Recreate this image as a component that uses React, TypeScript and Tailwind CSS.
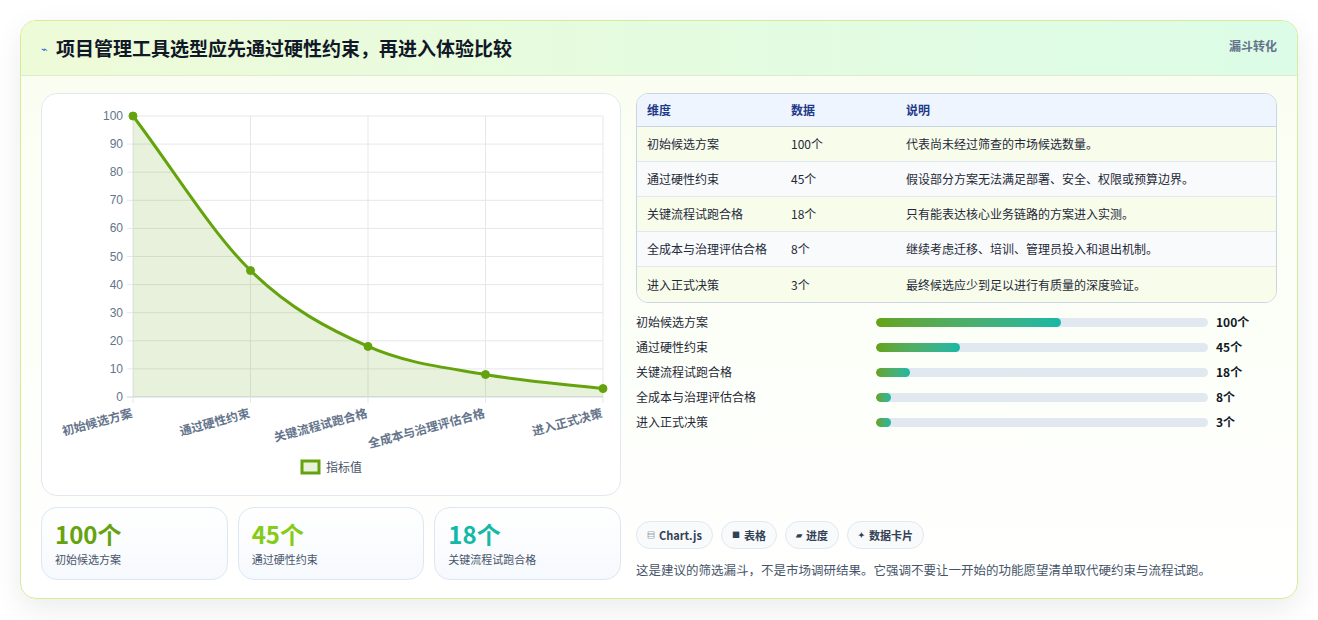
const F = { fontFamily: '"Noto Sans CJK SC","Noto Sans",sans-serif' };

const rows = [
  ["初始候选方案", "100个", "代表尚未经过筛查的市场候选数量。", 185],
  ["通过硬性约束", "45个", "假设部分方案无法满足部署、安全、权限或预算边界。", 84],
  ["关键流程试跑合格", "18个", "只有能表达核心业务链路的方案进入实测。", 34],
  ["全成本与治理评估合格", "8个", "继续考虑迁移、培训、管理员投入和退出机制。", 15],
  ["进入正式决策", "3个", "最终候选应少到足以进行有质量的深度验证。", 15],
] as const;

function Chart() {
  const x0 = 91, x1 = 561, yTop = 22, yBot = 303;
  const xs = [91, 208.5, 326, 443.5, 561];
  const vals = [100, 45, 18, 8, 3];
  const ys = vals.map((v) => yBot - (v / 100) * (yBot - yTop));
  const pts = xs.map((x, i) => [x, ys[i]]);
  // monotone-ish bezier
  let d = `M${pts[0][0]},${pts[0][1]}`;
  const tang = pts.map((p, i) => {
    const a = pts[Math.max(0, i - 1)], b = pts[Math.min(pts.length - 1, i + 1)];
    return (b[1] - a[1]) / (b[0] - a[0]);
  });
  for (let i = 0; i < pts.length - 1; i++) {
    const [xa, ya] = pts[i], [xb, yb] = pts[i + 1];
    const dx = (xb - xa) / 3;
    d += ` C${xa + dx},${ya + tang[i] * dx} ${xb - dx},${yb - tang[i + 1] * dx} ${xb},${yb}`;
  }
  const area = d + ` L${x1},${yBot} L${x0},${yBot} Z`;
  const labels = ["初始候选方案", "通过硬性约束", "关键流程试跑合格", "全成本与治理评估合格", "进入正式决策"];
  return (
    <svg width="580" height="403" className="block" style={F}>
      {Array.from({ length: 11 }).map((_, i) => {
        const y = yBot - i * 28.1;
        return (
          <g key={i}>
            <line x1={x0 - 6} x2={x1} y1={y} y2={y} stroke={i === 0 ? "#cbd5e1" : "#e5e7eb"} />
            <text x={x0 - 10} y={y + 4} fontSize="12" fill="#64748b" textAnchor="end" fontFamily="Liberation Sans, sans-serif">{i * 10}</text>
          </g>
        );
      })}
      {xs.map((x, i) => (
        <line key={i} x1={x} x2={x} y1={yTop} y2={yBot + 6} stroke="#e5e7eb" />
      ))}
      <path d={area} fill="rgba(101,163,13,0.15)" />
      <path d={d} fill="none" stroke="#65a30d" strokeWidth="3" />
      {pts.map(([x, y], i) => (
        <circle key={i} cx={x} cy={y} r="4" fill="#65a30d" stroke="#65a30d" />
      ))}
      {labels.map((l, i) => (
        <text key={i} x={xs[i]} y={yBot + 20} fontSize="12" fontWeight="600" fill="#64748b" textAnchor="end" transform={`rotate(-15 ${xs[i]} ${yBot + 20})`}>{l}</text>
      ))}
      <rect x="260" y="367" width="17" height="12" fill="rgba(101,163,13,0.15)" stroke="#65a30d" strokeWidth="3" />
      <text x="284" y="378" fontSize="12" fill="#475569">指标值</text>
    </svg>
  );
}

export default function App() {
  return (
    <div className="min-h-[620px] bg-white p-5" style={F}>
      <div className="rounded-2xl border border-[#d4ed9a] bg-gradient-to-b from-[#f9fef0] to-white shadow-[0_10px_30px_rgba(0,0,0,0.08)] overflow-hidden">
        <div className="h-[55px] flex items-start justify-between bg-gradient-to-r from-[#eefbd8] to-[#dcfce7] border-b border-[#dfeccc] px-5">
          <div className="flex items-center gap-2 h-full">
            <span className="text-[#2563eb] text-[11px]">⌁</span>
            <h1 className="text-[19px] font-bold text-[#111827]">项目管理工具选型应先通过硬性约束，再进入体验比较</h1>
          </div>
          <div className="pt-[16px] text-[12px] font-bold text-[#64748b]">漏斗转化</div>
        </div>
        <div className="flex gap-[15px] px-5 pt-[17px] pb-[18px]">
          <div className="w-[580px] flex flex-col gap-[11px]">
            <div className="h-[403px] rounded-2xl border border-[#e2e8f0] bg-white">
              <Chart />
            </div>
            <div className="grid grid-cols-3 gap-[10px]">
              {[["100个", "初始候选方案", "text-[#65a30d]"], ["45个", "通过硬性约束", "text-[#84cc16]"], ["18个", "关键流程试跑合格", "text-[#14b8a6]"]].map(([v, l, c]) => (
                <div key={l} className="h-[73px] rounded-2xl border border-[#dbe7f3] bg-gradient-to-b from-white to-[#f6f9fd] px-[13px] pt-[11px]">
                  <div className={`text-[24px] leading-[30px] font-bold ${c}`}>{v}</div>
                  <div className="text-[11px] text-[#475569] mt-[2px]">{l}</div>
                </div>
              ))}
            </div>
          </div>
          <div className="flex-1 flex flex-col">
            <div className="rounded-xl border border-[#cbd5e1] overflow-hidden text-[12px]">
              <div className="flex h-[33px] items-center bg-[#eef5fe] border-b border-[#cbd5e1] font-bold text-[#1e3a8a]">
                <div className="w-[154px] pl-[10px]">维度</div>
                <div className="w-[115px]">数据</div>
                <div>说明</div>
              </div>
              {rows.map((r, i) => (
                <div key={i} className={`flex h-[35px] items-center text-[#1f2937] ${i % 2 ? "bg-[#f8fafc]" : "bg-[#f7fceb]"} ${i < 4 ? "border-b border-[#e2e8f0]" : ""}`}>
                  <div className="w-[154px] pl-[10px]">{r[0]}</div>
                  <div className="w-[115px]">{r[1]}</div>
                  <div>{r[2]}</div>
                </div>
              ))}
            </div>
            <div className="flex flex-col gap-[11px] mt-[12px] text-[12px]">
              {rows.map((r, i) => (
                <div key={i} className="flex items-center h-[14px]">
                  <div className="w-[240px] text-[#1f2937]">{r[0]}</div>
                  <div className="w-[332px] h-[9px] rounded-full bg-[#e2e8f0] overflow-hidden">
                    <div className="h-full rounded-full bg-gradient-to-r from-[#65a30d] to-[#14b8a6]" style={{ width: r[3] }} />
                  </div>
                  <div className="ml-[8px] font-bold text-[#111827]">{r[1]}</div>
                </div>
              ))}
            </div>
            <div className="mt-auto flex gap-[8px]">
              {[["▤", "Chart.js"], ["■", "表格"], ["▰", "进度"], ["✦", "数据卡片"]].map(([ic, t]) => (
                <div key={t} className="h-[28px] rounded-full border border-[#e2e8f0] bg-[#f8fafc] px-[10px] flex items-center gap-1 text-[11px] font-bold text-[#334155]">
                  <span className="text-[8px]">{ic}</span>{t}
                </div>
              ))}
            </div>
            <div className="mt-[12px] text-[12.5px] text-[#475569]">这是建议的筛选漏斗，不是市场调研结果。它强调不要让一开始的功能愿望清单取代硬约束与流程试跑。</div>
          </div>
        </div>
      </div>
    </div>
  );
}
